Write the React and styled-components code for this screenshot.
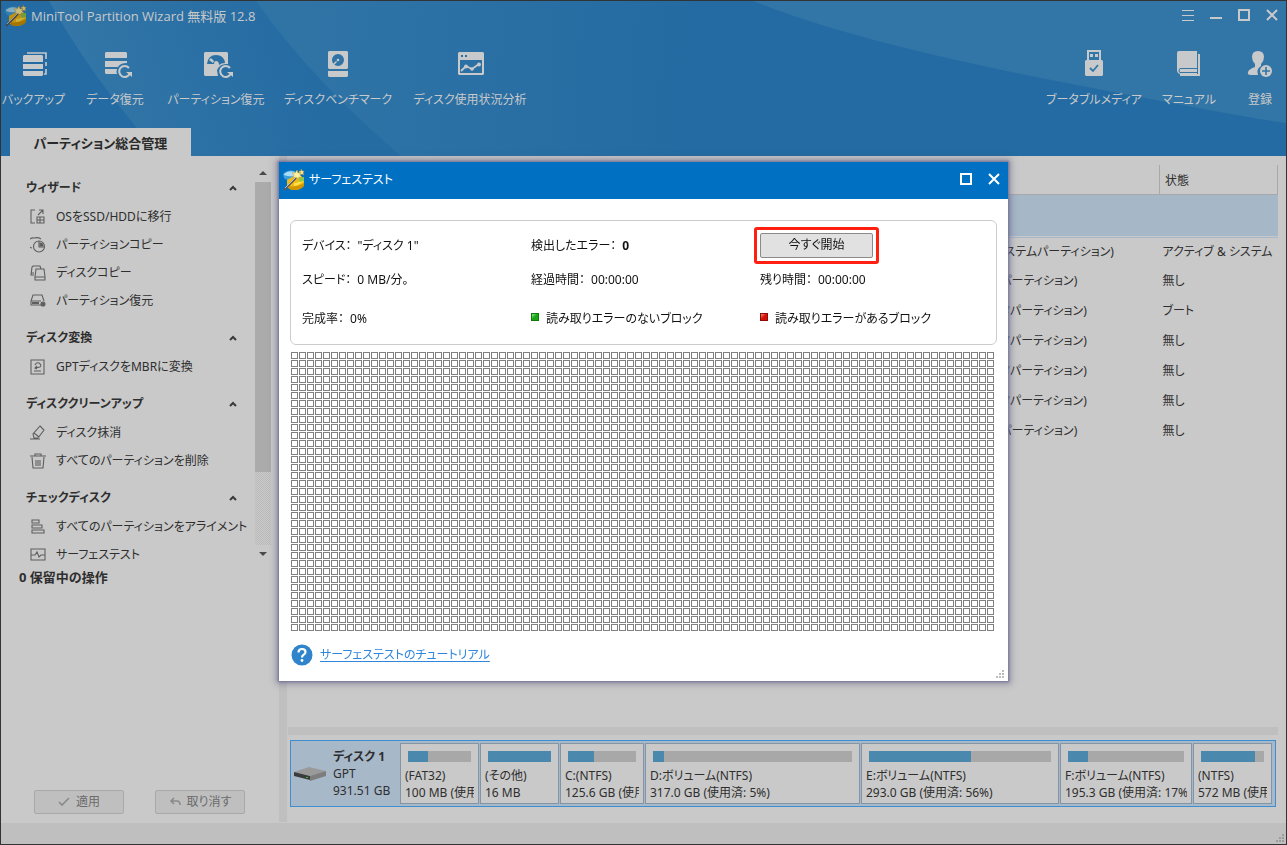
import React from 'react';
import styled, { createGlobalStyle, css } from 'styled-components';

const GlobalStyle = createGlobalStyle`
  * {
    box-sizing: border-box;
  }

  body {
    margin: 0;
    background: #c9c9c9;
    color: #2e2e2e;
    font-family: 'Noto Sans', 'Noto Sans CJK JP', sans-serif;
    font-size: 12px;
    line-height: 16px;
    font-feature-settings: 'palt', 'kern';
  }

  button {
    margin: 0;
    padding: 0;
    border: 0;
    background: none;
    color: inherit;
    font: inherit;
    font-feature-settings: inherit;
  }
`;

const Window = styled.div`
  display: flex;
  flex-direction: column;
  min-height: 100vh;
  border: 1px solid #333333;
`;

const Header = styled.header`
  position: relative;
  display: flex;
  flex-direction: column;
  background: #236ba2;
  color: #c8c9ca;
`;

const Beams = styled.svg`
  position: absolute;
  inset: 0;
  width: 100%;
  height: 100%;
`;

const TitleBar = styled.div`
  position: relative;
  display: flex;
  align-items: center;
  height: 30px;
  padding-left: 4px;
`;

const Title = styled.h1`
  flex: 1;
  margin: 0;
  font-family: 'Open Sans', 'Noto Sans CJK JP', sans-serif;
  font-size: 13px;
  font-weight: 400;
`;

const DialogTitle = styled.h2`
  flex: 1;
  margin: 0;
  font-size: 12px;
  font-weight: 400;
`;

const ControlButton = styled.button`
  display: flex;
  align-items: center;
  justify-content: center;
  width: 28px;
  height: 28px;
`;

const Toolbar = styled.div`
  position: relative;
  display: flex;
  justify-content: space-between;
  padding-top: 19px;
`;

const ToolGroup = styled.div`
  display: flex;
  gap: 12px;
`;

const ToolButton = styled.button`
  display: flex;
  flex-direction: column;
  align-items: center;
  gap: 14px;
  width: ${({ $width }) => $width}px;
  white-space: nowrap;
`;

const TabBar = styled.div`
  position: relative;
  display: flex;
  padding: 20px 9px 0;
`;

const Tab = styled.button`
  width: 181px;
  height: 28px;
  padding-top: 2px;
  background: #c9c9c9;
  color: #2a2a2a;
  font-size: 13px;
  font-weight: 700;
`;

const Main = styled.main`
  flex: 1;
  display: flex;
`;

const Sidebar = styled.aside`
  display: flex;
  flex-direction: column;
  width: 278px;
  flex: none;
`;

const NavArea = styled.div`
  display: flex;
`;

const Nav = styled.nav`
  flex: 1;
  display: flex;
  flex-direction: column;
  gap: 8px;
  padding-top: 17px;
`;

const SectionTitle = styled.h2`
  display: flex;
  align-items: center;
  justify-content: space-between;
  height: 30px;
  margin: 0;
  padding: 0 17px 0 25px;
  font-size: 12px;
  font-weight: 700;
`;

const NavItem = styled.button`
  display: flex;
  align-items: center;
  gap: 10px;
  width: 100%;
  height: 28px;
  padding-left: 29px;
  white-space: nowrap;
`;

const Scrollbar = styled.div`
  display: flex;
  flex-direction: column;
  width: 16px;
  margin-right: 8px;
  padding: 8px 0 6px;
`;

const ScrollArrow = styled.button`
  display: flex;
  align-items: center;
  justify-content: center;
  height: 18px;
`;

const Track = styled.div`
  flex: 1;
  background: repeating-conic-gradient(#bababa 0 25%, #c9c9c9 0 50%) 0 0 / 2px
    2px;
`;

const Thumb = styled.div`
  height: 80%;
  background: #ababab;
`;

const Pending = styled.div`
  padding-left: 18px;
  font-size: 13px;
  font-weight: 700;
`;

const Actions = styled.div`
  display: flex;
  gap: 31px;
  margin-top: auto;
  padding: 0 34px 9px 33px;
`;

const ActionButton = styled.button`
  display: flex;
  flex: 1;
  align-items: center;
  justify-content: center;
  gap: 6px;
  height: 24px;
  border: 1px solid #a9a9a9;
  border-radius: 2px;
  background: #bfbfbf;
  color: #6b6b6b;
`;

const Splitter = styled.div`
  width: 8px;
  margin-bottom: 1px;
  background: #bfbfbf;
`;

const Content = styled.section`
  flex: 1;
  min-width: 0;
  display: flex;
  flex-direction: column;
  padding: 9px 8px 16px 1px;
`;

const PartitionTable = styled.table`
  width: 100%;
  border-collapse: collapse;
  table-layout: fixed;
  white-space: nowrap;

  th {
    height: 29px;
    padding: 3px 5px 0;
    border-right: 1px solid #a9a9a9;
    border-bottom: 1px solid #a9a9a9;
    font-weight: 400;
    text-align: left;
  }

  td {
    height: 30px;
    padding: 0 3px;
  }
`;

const TypeHead = styled.th``;

const StatusHead = styled.th`
  width: 118px;
`;

const TypeCell = styled.td`
  && {
    padding-left: 659px;
  }
`;

const DiskRow = styled.tr`
  && td {
    height: 42px;
    background: #a6b7c7;
    border-bottom: 3px double #a6b7c7;
    background-clip: padding-box;
  }
`;

const Divider = styled.div`
  height: 8px;
  margin: auto 0 5px;
  background: #bfbfbf;
`;

const DiskPanel = styled.div`
  display: flex;
  margin: 0 2px;
  padding: 2px 3px 2px 0;
  border: 1px solid #3f8fd0;
  background: #a7b8c9;
`;

const DiskInfo = styled.div`
  display: flex;
  align-items: center;
  gap: 7px;
  width: 109px;
  padding-left: 3px;
  line-height: 17px;
  white-space: nowrap;
`;

const DiskName = styled.div`
  font-size: 12px;
  font-weight: 700;
`;

const Partitions = styled.div`
  flex: 1;
  display: grid;
  grid-template-columns: 79px 79px 84px 215fr 198fr 132fr 79px;
  gap: 1px;
  min-width: 0;
`;

const Partition = styled.div`
  min-width: 0;
  height: 61px;
  padding: 7px 4px 0;
  border: 1px solid #8494a4;
  background: #c9c9c9;
  line-height: 17px;
`;

const UsageBar = styled.div`
  height: 11px;
  margin: 0 3px 5px;
  background: #a8a8a8;
`;

const UsageFill = styled.div`
  height: 100%;
  background: #4a88ae;
`;

const Clipped = styled.div`
  overflow: hidden;
  white-space: nowrap;
`;

const StatusBar = styled.footer`
  display: flex;
  align-items: flex-end;
  justify-content: flex-end;
  height: 21px;
  padding: 1px;
  background: #bfbfbf;
`;

const Overlay = styled.div`
  position: fixed;
  inset: 0;
  display: flex;
  align-items: center;
  justify-content: center;
  padding-bottom: 2px;
`;

const Dialog = styled.div`
  display: flex;
  flex-direction: column;
  width: 729px;
  background: #ffffff;
  color: #111111;
  box-shadow: 0 0 2px 1px #77779a, 0 0 6px 3px rgba(90, 90, 125, 0.5);
`;

const DialogHeader = styled.div`
  display: flex;
  align-items: center;
  height: 37px;
  padding: 0 0 2px 4px;
  background: #0071c2;
  color: #ffffff;
`;

const DialogBody = styled.div`
  padding: 21px 11px 0;
`;

const InfoBox = styled.div`
  display: grid;
  grid-template-columns: 229px 229px 1fr;
  grid-template-rows: 34px 34px 44px;
  align-items: center;
  padding: 7px 0 4px 11px;
  border: 1px solid #cccccc;
  border-radius: 6px;
`;

const Field = styled.div`
  display: flex;
  gap: 6px;
  padding-top: 2px;
`;

const Legend = styled.div`
  display: flex;
  align-items: center;
  gap: 7px;
  padding-top: 2px;
`;

const Swatch = styled.span`
  width: 8px;
  height: 8px;
  margin-bottom: 4px;
  border: 1px solid;
  ${({ $error }) =>
    $error
      ? css`
          border-color: #8d0d06;
          background: linear-gradient(135deg, #ff8a7a, #d01208 50%);
        `
      : css`
          border-color: #0e7a0c;
          background: linear-gradient(135deg, #8fe887, #18a514 50%);
        `}
`;

const Highlight = styled.div`
  justify-self: start;
  margin: -8px -6px;
  padding: 3px;
  border: 3px solid #ff2012;
  border-radius: 3px;
`;

const StartButton = styled.button`
  display: block;
  width: 113px;
  height: 25px;
  border: 1px solid #8a8a8a;
  border-radius: 2px;
  background: #e1e1e1;
`;

const BlockMap = styled.div`
  display: grid;
  grid-template-columns: repeat(88, 7px);
  grid-auto-rows: 7px;
  gap: 1px;
  margin: 7px 1px 0;
`;

const Block = styled.i`
  border: 1px solid #808080;
`;

const DialogFooter = styled.div`
  position: relative;
  display: flex;
  align-items: center;
  gap: 7px;
  padding: 13px 12px 15px;
`;

const HelpLink = styled.a`
  color: #2f86dc;
  text-decoration: underline;
  text-underline-offset: 2px;
`;

const GripCorner = styled.div`
  position: absolute;
  right: 3px;
  bottom: 2px;
  display: flex;
`;

const AppIcon = ({ dim }) => (
  <svg
    width="22"
    height="22"
    viewBox="0 0 22 22"
    style={{ marginRight: 4, filter: dim ? 'brightness(0.79)' : 'none' }}
  >
    <path d="M0 5q4-5 12-3l-2 10q-6 0-9-3z" fill="#3f9fdc" />
    <path d="M1 5q4-4 11-2l-1 4q-5 1-10-1z" fill="#a9dcf6" />
    <path d="M4 11l9-5 8 3v7q-3 5-10 5-4 0-7-3z" fill="#f0bb12" />
    <path d="M6 17q7 2 15-3v3q-3 4-10 4-3 0-5-1z" fill="#d29400" />
    <path d="M11 14q5 0 9-4v3q-4 3-9 4z" fill="#ffe04a" />
    <path d="M15 9l6-1v4l-4 1z" fill="#8fc84a" />
    <path
      d="M14 1l1 3 3-1-1 3 2 2h-3l-1 2-2-2-3 1 1-3-2-2h3zM18 0l1 2h2l-1 2 1 2-2-1-2 1V4l-1-2h2z"
      fill="#fff0a0"
      stroke="#b8963a"
      strokeWidth="0.5"
    />
    <path d="M1 21L13 9" stroke="#5d5860" strokeWidth="1.8" />
    <path d="M2 19L13 8" stroke="#dedade" strokeWidth="0.8" />
  </svg>
);

const MenuGlyph = () => (
  <svg width="14" height="14" fill="currentColor">
    <path d="M1 1h12v1H1zM1 6h12v1H1zM1 11h12v1H1z" />
  </svg>
);

const MinimizeGlyph = () => (
  <svg width="14" height="14" fill="currentColor">
    <path d="M1 8h12v2H1z" />
  </svg>
);

const MaximizeGlyph = () => (
  <svg width="14" height="14" fill="none" stroke="currentColor" strokeWidth="2">
    <path d="M2 1h10v10H2z" />
  </svg>
);

const CloseGlyph = () => (
  <svg width="14" height="14" fill="none" stroke="currentColor" strokeWidth="2">
    <path d="M2 1l10 10M12 1L2 11" />
  </svg>
);

const Grip = ({ color }) => (
  <svg width="9" height="9" fill={color}>
    <path d="M6 0h2v2H6zM3 3h2v2H3zM6 3h2v2H6zM0 6h2v2H0zM3 6h2v2H3zM6 6h2v2H6z" />
  </svg>
);

const RefreshMark = () => (
  <>
    <path
      d="M28 18a5.5 5.5 0 1 0 1 5"
      fill="none"
      stroke="currentColor"
      strokeWidth="2"
    />
    <path d="M25 22h6v5z" />
  </>
);

const TOOL_SHAPES = {
  backup: (
    <>
      <path d="M4 5h18l1 1v6H3V6zM3 14h20v5H3zM3 21h20v4l-1 1H4l-1-1z" />
      <path
        d="M7 3h19v6M26 12v4M26 19v5h-2"
        fill="none"
        stroke="currentColor"
        strokeWidth="1.6"
      />
    </>
  ),
  data: (
    <>
      <path d="M5 2h20l1 1v5H4V3zM4 11h22v2q-7 0-9 4H4zM4 19h12q-1 3 0 5H5l-1-1z" />
      <RefreshMark />
    </>
  ),
  partition: (
    <>
      <path
        fillRule="evenodd"
        d="M3 2h22l1 1v11q-8-1-11 6l1 6H3l-1-1V3zM5 14q1-9 9-9t9 8q-4 0-6 2 0-4-3-4-2 0-2 3z"
      />
      <circle cx="14.500" cy="14" r="1.500" />
      <path d="M7 10l2-2 3 3-1 2z" />
      <RefreshMark />
    </>
  ),
  benchmark: (
    <>
      <path
        fillRule="evenodd"
        d="M5 1h18l1 1v16l-1 1H5l-1-1V2zM14 4a6 6 0 1 0 0 12a6 6 0 1 0 0-12z"
      />
      <circle cx="14" cy="10" r="1.300" />
      <path d="M8 15l4-4 1 1-4 4zM4 21h20v5l-1 1H5l-1-1z" />
    </>
  ),
  usage: (
    <>
      <path
        fillRule="evenodd"
        d="M3 2h24l1 1v21l-1 1H3l-1-1V3zM4 10h22v13H4zM5 5v2h2V5zM9 5v2h2V5z"
      />
      <path
        d="M5 21l5-5 6 3 7-5"
        fill="none"
        stroke="currentColor"
        strokeWidth="1.8"
      />
      <circle cx="10" cy="16.500" r="2" />
      <circle cx="16" cy="19" r="1.800" />
      <circle cx="23" cy="14.500" r="2" />
    </>
  ),
  usb: (
    <>
      <path
        fillRule="evenodd"
        d="M7 0h14v10H7zM9 2v8h10V2zM10 4h3v3h-3zM15 4h3v3h-3z"
      />
      <path d="M10 4h3v3h-3zM15 4h3v3h-3z" />
      <path d="M6 10h16l1 1v14l-1 1H6l-1-1V11z" />
      <path
        d="M10 18l3 3 5-6"
        fill="none"
        stroke="#3275a7"
        strokeWidth="1.8"
      />
    </>
  ),
  manual: (
    <>
      <path d="M4 1h18v23H6q-4 0-4-4V3q0-2 2-2z" />
      <path d="M5 18h18v1H5q-1 2 0 3h17v1H5q-3-2 0-5z" fill="#3275a7" />
      <path d="M23 4h2v22H5v-2h18z" />
    </>
  ),
  register: (
    <>
      <path d="M12 1q6 0 6 6 0 4-3 7v2q-5 3-3 9H5q-4 0-3-3 1-3 7-5v-3q-3-3-3-7 0-6 6-6z" />
      <circle cx="20" cy="21" r="6" />
      <path d="M20 17v8M16 21h8" stroke="#3275a7" strokeWidth="1.600" />
    </>
  )
};

const ToolIcon = ({ name }) => (
  <svg width="28" height="28" viewBox="0 0 28 28" overflow="visible" fill="currentColor">
    {TOOL_SHAPES[name]}
  </svg>
);

const NAV_SHAPES = {
  migrate: (
    <>
      <path d="M5 1H1v13h4M7 8h7v6H7zM7 11h7M10 8v6M8 6l5-5M9 1h4v4" />
    </>
  ),
  copyPartition: (
    <>
      <circle cx="9" cy="9.500" r="5.500" />
      <path d="M9 4v6h5M2 11A5 5 0 0 1 4 1q4-1 7 1" />
      <path d="M10 6q3 0 3 3h-3z" fill="currentColor" />
    </>
  ),
  copyDisk: (
    <>
      <path d="M4 10H1l1-8 1-1h7l1 3M1 8h3M6 4h8l1 8v3H5v-3zM5 12h10" />
    </>
  ),
  restore: (
    <>
      <path d="M1 8l2-6h9l2 6M1 8h10M1 8v4h10" />
      <path d="M2 10h7" strokeWidth="2" />
      <circle cx="13" cy="11" r="2" fill="currentColor" />
    </>
  ),
  convert: (
    <>
      <path d="M1 1h13v14H1zM4 12h7" />
      <path d="M5 6q1-3 4-2 3 2 1 4l-5 1M7 7L5 9l2 1" />
    </>
  ),
  wipe: (
    <>
      <path d="M10 1l4 4-6 8H4L3 9zM4 8l5 4M0 14h10" />
    </>
  ),
  trash: (
    <>
      <path d="M0 3h16M5 3V1h6v2M2 4l1 11h10l1-11M6 7v6M8 7v6M10 7v6" />
    </>
  ),
  align: (
    <>
      <path d="M2 1h7v3H2zM2 6h10v3H2zM2 11h12v3H2z" />
    </>
  ),
  surface: (
    <>
      <path d="M1 2h14v11H1zM1 8h4l2-3 2 5 2-2h4" />
    </>
  )
};

const NavIcon = ({ name }) => (
  <svg
    width="16"
    height="16"
    viewBox="0 0 16 16"
    fill="none"
    stroke="currentColor"
    strokeWidth="1.1"
    color="#5f5f5f"
  >
    {NAV_SHAPES[name]}
  </svg>
);

const Chevron = () => (
  <svg width="10" height="8" fill="none" stroke="#3a3a3a" strokeWidth="2">
    <path d="M2 6l3-3 3 3" />
  </svg>
);

const HeaderBeams = () => (
  <Beams viewBox="0 0 1285 155" preserveAspectRatio="none" aria-hidden="true">
    <defs>
      <linearGradient id="beamLeft" gradientUnits="userSpaceOnUse" x1="70" y1="60" x2="290" y2="0">
        <stop offset="0" stopColor="#3376a7" />
        <stop offset="1" stopColor="#256ca3" />
      </linearGradient>
      <linearGradient id="beamRight" gradientUnits="userSpaceOnUse" x1="300" y1="60" x2="690" y2="80">
        <stop offset="0" stopColor="#3074a6" />
        <stop offset="1" stopColor="#236ba2" />
      </linearGradient>
    </defs>
    <path d="M48 0Q86 68 137 128L160 155H420L260 0z" fill="url(#beamLeft)" />
    <path d="M255 0Q310 78 400 155H900V0z" fill="url(#beamRight)" />
    <path d="M752 0Q850 40 1050 79T1285 122V0z" fill="#3275a7" />
  </Beams>
);

const leftTools = [
  { icon: 'backup', label: 'バックアップ', width: 65 },
  { icon: 'data', label: 'データ復元', width: 74 },
  { icon: 'partition', label: 'パーティション復元', width: 104 },
  { icon: 'benchmark', label: 'ディスクベンチマーク', width: 116 },
  { icon: 'usage', label: 'ディスク使用状況分析', width: 124 }
];

const rightTools = [
  { icon: 'usb', label: 'ブータブルメディア', width: 100 },
  { icon: 'manual', label: 'マニュアル', width: 66 },
  { icon: 'register', label: '登録', width: 52 }
];

const sections = [
  {
    title: 'ウィザード',
    items: [
      { icon: 'migrate', label: 'OSをSSD/HDDに移行' },
      { icon: 'copyPartition', label: 'パーティションコピー' },
      { icon: 'copyDisk', label: 'ディスクコピー' },
      { icon: 'restore', label: 'パーティション復元' }
    ]
  },
  {
    title: 'ディスク変換',
    items: [{ icon: 'convert', label: 'GPTディスクをMBRに変換' }]
  },
  {
    title: 'ディスククリーンアップ',
    items: [
      { icon: 'wipe', label: 'ディスク抹消' },
      { icon: 'trash', label: 'すべてのパーティションを削除' }
    ]
  },
  {
    title: 'チェックディスク',
    items: [
      { icon: 'align', label: 'すべてのパーティションをアライメント' },
      { icon: 'surface', label: 'サーフェステスト' }
    ]
  }
];

const rows = [
  { type: 'GPT (EFIシステムパーティション)', status: 'アクティブ & システム' },
  { type: 'GPT (予約パーティション)', status: '無し' },
  { type: 'GPT (データパーティション)', status: 'ブート' },
  { type: 'GPT (データパーティション)', status: '無し' },
  { type: 'GPT (データパーティション)', status: '無し' },
  { type: 'GPT (データパーティション)', status: '無し' },
  { type: 'GPT (復元パーティション)', status: '無し' }
];

const partitions = [
  { name: '(FAT32)', size: '100 MB (使用済: 32%)', used: 32 },
  { name: '(その他)', size: '16 MB', used: 100 },
  { name: 'C:(NTFS)', size: '125.6 GB (使用済: 38%)', used: 38 },
  { name: 'D:ボリューム(NTFS)', size: '317.0 GB (使用済: 5%)', used: 5.5 },
  { name: 'E:ボリューム(NTFS)', size: '293.0 GB (使用済: 56%)', used: 56 },
  { name: 'F:ボリューム(NTFS)', size: '195.3 GB (使用済: 17%)', used: 17 },
  { name: '(NTFS)', size: '572 MB (使用済: 86%)', used: 86 }
];

const blocks = Array.from({ length: 88 * 35 }, (_, i) => i);

const Tools = ({ items }) => (
  <ToolGroup>
    {items.map(({ icon, label, width }) => (
      <ToolButton key={icon} $width={width}>
        <ToolIcon name={icon} />
        {label}
      </ToolButton>
    ))}
  </ToolGroup>
);

const AppHeader = () => (
  <Header>
    <HeaderBeams />
    <TitleBar>
      <AppIcon dim />
      <Title>MiniTool Partition Wizard 無料版 12.8</Title>
      <ControlButton aria-label="メニュー">
        <MenuGlyph />
      </ControlButton>
      <ControlButton aria-label="最小化">
        <MinimizeGlyph />
      </ControlButton>
      <ControlButton aria-label="最大化">
        <MaximizeGlyph />
      </ControlButton>
      <ControlButton aria-label="閉じる">
        <CloseGlyph />
      </ControlButton>
    </TitleBar>
    <Toolbar>
      <Tools items={leftTools} />
      <Tools items={rightTools} />
    </Toolbar>
    <TabBar>
      <Tab>パーティション総合管理</Tab>
    </TabBar>
  </Header>
);

const SidePanel = () => (
  <Sidebar>
    <NavArea>
      <Nav>
        {sections.map(section => (
          <div key={section.title}>
            <SectionTitle>
              {section.title}
              <Chevron />
            </SectionTitle>
            {section.items.map(item => (
              <NavItem key={item.label}>
                <NavIcon name={item.icon} />
                {item.label}
              </NavItem>
            ))}
          </div>
        ))}
      </Nav>
      <Scrollbar>
        <ScrollArrow aria-label="上へ">
          <svg width="8" height="4" fill="#4a4a4a">
            <path d="M0 4l4-4 4 4z" />
          </svg>
        </ScrollArrow>
        <Track>
          <Thumb />
        </Track>
        <ScrollArrow aria-label="下へ">
          <svg width="8" height="4" fill="#4a4a4a">
            <path d="M0 0h8l-4 4z" />
          </svg>
        </ScrollArrow>
      </Scrollbar>
    </NavArea>
    <Pending>0 保留中の操作</Pending>
    <Actions>
      <ActionButton>
        <svg width="12" height="10" fill="none" stroke="#8a8a8a" strokeWidth="1.6">
          <path d="M1 5l3 3 7-7" />
        </svg>
        適用
      </ActionButton>
      <ActionButton>
        <svg width="12" height="10" fill="none" stroke="#8a8a8a" strokeWidth="1.6">
          <path d="M5 1L2 4l3 3M2 4h6q3 0 3 4" />
        </svg>
        取り消す
      </ActionButton>
    </Actions>
  </Sidebar>
);

const DiskMap = () => (
  <DiskPanel>
    <DiskInfo>
      <svg width="32" height="14" viewBox="0 0 32 14">
        <path d="M0 5l15-5 17 4-16 5z" fill="#9a9a9a" />
        <path d="M0 5l16 4v4L0 9z" fill="#3b3b3b" />
        <path d="M16 9l16-5v5l-16 5z" fill="#7d7d7d" />
        <path d="M12 10h2v1h-2z" fill="#2fc02f" />
      </svg>
      <div>
        <DiskName>ディスク 1</DiskName>
        <div>GPT</div>
        <div>931.51 GB</div>
      </div>
    </DiskInfo>
    <Partitions>
      {partitions.map(({ name, size, used }) => (
        <Partition key={name}>
          <UsageBar>
            <UsageFill style={{ width: `${used}%` }} />
          </UsageBar>
          <Clipped>{name}</Clipped>
          <Clipped>{size}</Clipped>
        </Partition>
      ))}
    </Partitions>
  </DiskPanel>
);

const PartitionList = () => (
  <Content>
    <PartitionTable>
      <thead>
        <tr>
          <TypeHead aria-label="タイプ" />
          <StatusHead>状態</StatusHead>
        </tr>
      </thead>
      <tbody>
        <DiskRow>
          <td colSpan={2} />
        </DiskRow>
        {rows.map(({ type, status }, i) => (
          <tr key={i}>
            <TypeCell>{type}</TypeCell>
            <td>{status}</td>
          </tr>
        ))}
      </tbody>
    </PartitionTable>
    <Divider />
    <DiskMap />
  </Content>
);

const SurfaceTestDialog = () => (
  <Overlay>
    <Dialog role="dialog" aria-label="サーフェステスト">
      <DialogHeader>
        <AppIcon />
        <DialogTitle>サーフェステスト</DialogTitle>
        <ControlButton aria-label="最大化">
          <MaximizeGlyph />
        </ControlButton>
        <ControlButton aria-label="閉じる">
          <CloseGlyph />
        </ControlButton>
      </DialogHeader>
      <DialogBody>
        <InfoBox>
          <Field>
            <span>デバイス：</span>
            <span>"ディスク 1"</span>
          </Field>
          <Field>
            <span>検出したエラー：</span>
            <b>0</b>
          </Field>
          <Highlight>
            <StartButton>今すぐ開始</StartButton>
          </Highlight>
          <Field>
            <span>スピード：</span>
            <span>0 MB/分。</span>
          </Field>
          <Field>
            <span>経過時間：</span>
            <span>00:00:00</span>
          </Field>
          <Field>
            <span>残り時間：</span>
            <span>00:00:00</span>
          </Field>
          <Field>
            <span>完成率：</span>
            <span>0%</span>
          </Field>
          <Legend>
            <Swatch />
            読み取りエラーのないブロック
          </Legend>
          <Legend>
            <Swatch $error />
            読み取りエラーがあるブロック
          </Legend>
        </InfoBox>
        <BlockMap>
          {blocks.map(i => (
            <Block key={i} />
          ))}
        </BlockMap>
      </DialogBody>
      <DialogFooter>
        <svg width="22" height="22" viewBox="0 0 22 22" aria-hidden="true">
          <circle cx="11" cy="11" r="10.500" fill="#2f84cb" />
          <path
            d="M7.500 8.500q0-3.500 3.500-3.500t3.500 3q0 1.500-2 2.800-1.500 1-1.500 2.700"
            fill="none"
            stroke="#ffffff"
            strokeWidth="2.200"
          />
          <circle cx="11" cy="16.500" r="1.400" fill="#ffffff" />
        </svg>
        <HelpLink href="#tutorial">サーフェステストのチュートリアル</HelpLink>
        <GripCorner>
          <Grip color="#bdbdbd" />
        </GripCorner>
      </DialogFooter>
    </Dialog>
  </Overlay>
);

const App = () => (
  <>
    <GlobalStyle />
    <Window>
      <AppHeader />
      <Main>
        <SidePanel />
        <Splitter />
        <PartitionList />
      </Main>
      <StatusBar>
        <Grip color="#9c9c9c" />
      </StatusBar>
    </Window>
    <SurfaceTestDialog />
  </>
);

export default App;
